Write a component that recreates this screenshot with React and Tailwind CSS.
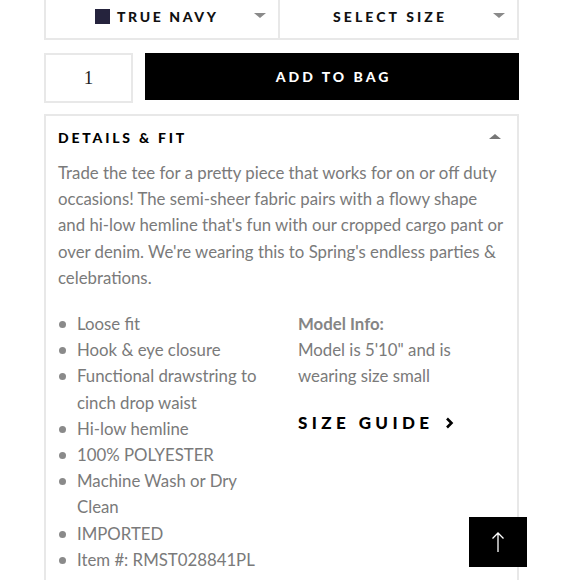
import React from 'react';

function Caret({up = false, className = ''}) {
    return (
        <svg width="12" height="6" viewBox="0 0 12 6" className={className}>
            {up ? <path d="M0 6 L6 1 L12 6 Z" fill="#777"/> : <path d="M0 0 L12 0 L6 5 Z" fill="#8a8a8a"/>}
        </svg>
    );
}

const bullets = [
    'Loose fit',
    'Hook & eye closure',
    'Functional drawstring to cinch drop waist',
    'Hi-low hemline',
    '100% POLYESTER',
    'Machine Wash or Dry Clean',
    'IMPORTED',
    'Item #: RMST028841PL',
];

export default function App() {
    return (
        <div className="w-[580px] h-[580px] overflow-hidden bg-white font-['Lato',sans-serif] relative">
            <div className="ml-[44px] w-[475px]">
                {/* selects */}
                <div className="flex h-[41px] -mt-[1px] border-x-2 border-b-2 border-[#e8e8e8]">
                    <div className="w-[234px] flex items-center pb-[5px] border-r-2 border-[#e8e8e8]">
                        <span className="ml-[49px] w-[15px] h-[15px] bg-[#25233d]"></span>
                        <span className="ml-[7px] text-[14px] font-black tracking-[2.6px] text-[#111]">TRUE NAVY</span>
                        <Caret className="ml-auto mr-[12px]"/>
                    </div>
                    <div className="flex-1 flex items-center pb-[5px]">
                        <span className="ml-[53px] text-[14px] font-black tracking-[3.1px] text-[#111]">SELECT SIZE</span>
                        <Caret className="ml-auto mr-[12px]"/>
                    </div>
                </div>

                {/* qty + add to bag */}
                <div className="flex mt-[13px] gap-[12px] items-start">
                    <div className="w-[89px] h-[50px] border-2 border-[#e8e8e8] flex items-center justify-center font-['Liberation_Serif',serif] text-[19px] text-[#222]">1</div>
                    <button className="flex-1 h-[47px] bg-black text-white text-[14px] font-black tracking-[3px] flex items-center justify-center pl-[3px]">ADD TO BAG</button>
                </div>

                {/* details */}
                <div className="mt-[11px] border-x-2 border-t-2 border-[#e8e8e8] pl-[12px] pr-[10px] pt-[10px] h-[500px]">
                    <div className="flex items-center justify-between h-[22px]">
                        <h3 className="text-[14px] font-black tracking-[2.8px] text-black">DETAILS &amp; FIT</h3>
                        <Caret up className="mr-[6px] -mt-[2px]"/>
                    </div>
                    <p className="mt-[12px] text-[16.8px] leading-[26.2px] text-[#7a7a7a] whitespace-nowrap">
                        Trade the tee for a pretty piece that works for on or off duty<br/>
                        occasions! The semi-sheer fabric pairs with a flowy shape<br/>
                        and hi-low hemline that's fun with our cropped cargo pant or<br/>
                        over denim. We're wearing this to Spring's endless parties &amp;<br/>
                        celebrations.
                    </p>
                    <div className="flex mt-[20px]">
                        <ul className="w-[240px] text-[16.8px] leading-[26.2px] text-[#7a7a7a]">
                            {bullets.map((b) => (
                                <li key={b} className="flex">
                                    <span className="w-[19px] shrink-0 flex justify-start pt-[10px] pl-[1px]">
                                        <span className="w-[7px] h-[7px] rounded-full bg-[#8a8a8a]"></span>
                                    </span>
                                    <span className="w-[190px]">{b}</span>
                                </li>
                            ))}
                        </ul>
                        <div className="flex-1 text-[16.8px] leading-[26.2px] text-[#7a7a7a]">
                            <p className="font-bold text-[#858585]">Model Info:</p>
                            <p className="pr-[40px]">Model is 5'10" and is wearing size small</p>
                            <p className="mt-[20px] text-[17px] font-black tracking-[4.4px] text-black flex items-center">
                                SIZE GUIDE
                                <svg width="9" height="12" viewBox="0 0 9 12" className="ml-[12px]">
                                    <path d="M2 1.5 L6.5 6 L2 10.5" stroke="#000" strokeWidth="2.6" fill="none"/>
                                </svg>
                            </p>
                        </div>
                    </div>
                </div>
            </div>

            <button className="absolute left-[469px] top-[517px] w-[58px] h-[50px] bg-black flex items-center justify-center">
                <svg width="14" height="22" viewBox="0 0 14 22">
                    <path d="M7 21 L7 2 M1.5 7.5 L7 2 L12.5 7.5" stroke="#fff" strokeWidth="1.3" fill="none"/>
                </svg>
            </button>
        </div>
    );
}
